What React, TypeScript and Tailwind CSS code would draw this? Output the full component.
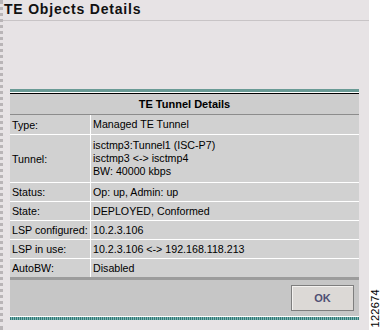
const rows: { label: string; value: string[]; h: string }[] = [
  { label: "Type:", value: ["Managed TE Tunnel"], h: "h-[20px]" },
  {
    label: "Tunnel:",
    value: ["isctmp3:Tunnel1 (ISC-P7)", "isctmp3 <-> isctmp4", "BW: 40000 kbps"],
    h: "h-[48px]",
  },
  { label: "Status:", value: ["Op: up, Admin: up"], h: "h-[19px]" },
  { label: "State:", value: ["DEPLOYED, Conformed"], h: "h-[19px]" },
  { label: "LSP configured:", value: ["10.2.3.106"], h: "h-[19px]" },
  { label: "LSP in use:", value: ["10.2.3.106 <-> 192.168.118.213"], h: "h-[19px]" },
];

export default function App() {
  return (
    <div className="w-[382px] h-[330px] flex bg-white overflow-hidden font-['Liberation_Sans',Arial,sans-serif] text-black">
      <div className="w-[369px] h-full bg-[#e7e3e5] border-l-[3px] border-dotted border-[#b9b5b7] flex flex-col">
        <div className="h-[21px] pl-[1px] pt-[1px] border-b border-[#c8c4c6]">
          <h1 className="text-[14px] leading-[16px] font-bold tracking-[0.8px] text-[#111]">
            TE Objects Details
          </h1>
        </div>

        <div className="ml-[7px] mt-[68px] w-[349px] flex flex-col">
          <div className="h-[3px] bg-[#6a9a95]" />
          <div className="h-[1px] bg-white" />
          <div className="h-[1px] bg-black" />
          <div className="h-[21px] bg-[#cdcdcd] border-b border-[#8c8c8c] flex items-center justify-center text-[11px] font-bold">
            TE Tunnel Details
          </div>

          {rows.map((r) => (
            <div key={r.label} className={`${r.h} flex bg-[#d1d1d1] border-b border-white text-[10.67px]`}>
              <div className="w-[81px] pl-[2px] flex items-center border-r border-white">{r.label}</div>
              <div className="flex-1 pl-[2px] flex flex-col justify-center leading-[13px]">
                {r.value.map((v) => (
                  <span key={v}>{v}</span>
                ))}
              </div>
            </div>
          ))}
          <div className="h-[18px] flex bg-[#d1d1d1] text-[10.67px]">
            <div className="w-[81px] pl-[2px] flex items-center border-r border-white">AutoBW:</div>
            <div className="flex-1 pl-[2px] flex items-center">Disabled</div>
          </div>
          <div className="h-[3px] bg-[#9c9c9c]" />

          <div className="h-[36px] bg-[#c6c6c6] flex justify-end items-start pt-[5px] pr-[5px]">
            <button className="w-[63px] h-[26px] bg-[#dcd9d6] border border-[#7e7e7e] shadow-[inset_1px_1px_0_#f4f2f0] text-[11px] font-bold text-[#4f4f74]">
              OK
            </button>
          </div>
          <div className="h-[1px] bg-white" />
          <div className="h-[3px] bg-[repeating-linear-gradient(90deg,#2d7a78_0_1px,#7fb3b0_1px_2px)]" />
        </div>
      </div>

      <div className="flex-1 flex flex-col justify-end items-center pb-[2px]">
        <span className="[writing-mode:vertical-rl] rotate-180 text-[11px] leading-[11px] tracking-[0.3px]">
          122674
        </span>
      </div>
    </div>
  );
}
